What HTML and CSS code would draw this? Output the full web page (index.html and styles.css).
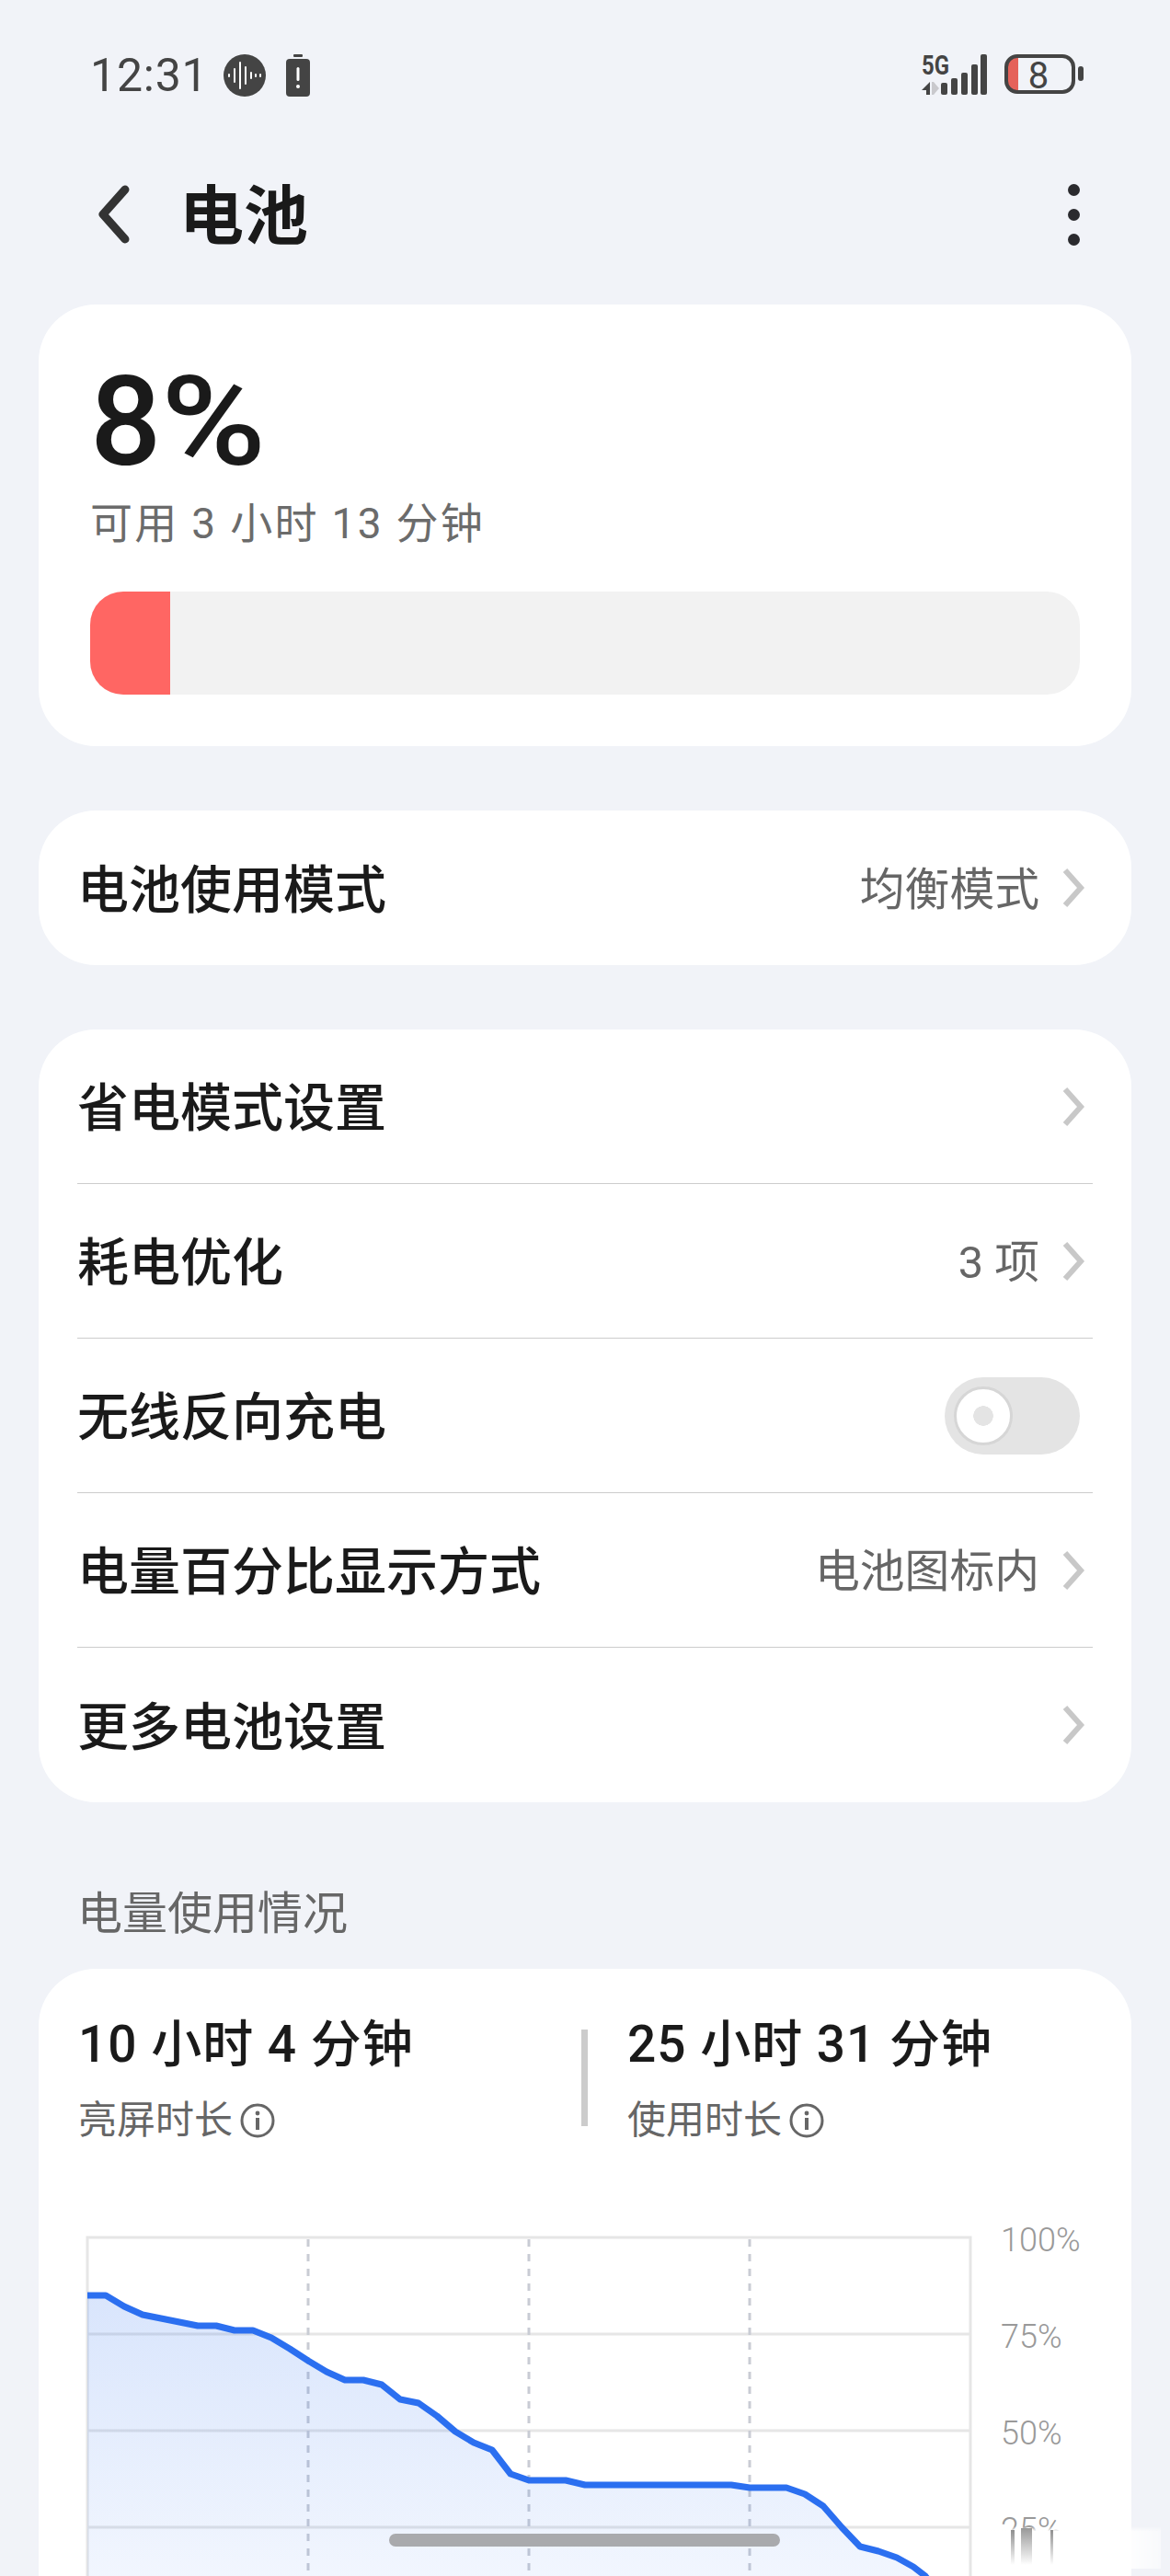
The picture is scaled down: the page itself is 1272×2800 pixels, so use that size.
FILE: index.html
```html
<!DOCTYPE html>
<html lang="zh-CN">
<head>
<meta charset="UTF-8" />
<meta name="viewport" content="width=device-width, initial-scale=1" />
<title>电池</title>
<link rel="stylesheet" href="styles.css">
</head>
<body>
<div class="page">

  <div class="statusbar">
    <div class="status-left">
      <span class="time">12:31</span>
      <svg class="status-mic" width="46" height="46" viewBox="0 0 46 46">
        <circle cx="23" cy="23" r="23" fill="#444"/>
        <g stroke="#fff" stroke-width="2" stroke-linecap="round">
          <path d="M6 22v2M12 16v14M18 9v28M24 14v18M30 20v6M35 22v2M40 22v2"/>
        </g>
      </svg>
      <svg class="status-alert" width="26" height="46" viewBox="0 0 26 46">
        <rect x="8" y="0" width="10" height="3" rx="1" fill="#444"/>
        <rect x="0" y="5" width="26" height="41" rx="4" fill="#444"/>
        <rect x="11.5" y="14" width="3" height="15" rx="1.5" fill="#fff"/>
        <circle cx="13" cy="35" r="2" fill="#fff"/>
      </svg>
    </div>
    <svg class="status-right" width="180" height="64" viewBox="0 -6 180 64">
      <text class="net-label" x="2" y="25" textLength="30" lengthAdjust="spacingAndGlyphs">5G</text>
      <path d="M2 42L11 33V47H7V42Z" fill="#444"/>
      <path d="M13 33H15L21 40L15 47H13Z" fill="#c9c9cd"/>
      <g fill="#444">
        <rect x="23" y="34" width="7" height="13" rx="2"/>
        <rect x="34" y="29" width="7" height="18" rx="2"/>
        <rect x="45" y="23" width="7" height="24" rx="2"/>
        <rect x="56" y="14" width="7" height="33" rx="2"/>
        <rect x="66" y="3" width="7" height="44" rx="2"/>
        <rect x="172" y="16" width="6" height="16" rx="3"/>
      </g>
      <path d="M107 5H105A11 11 0 0 0 94 16V33A11 11 0 0 0 105 44H107Z" fill="#e5625a"/>
      <rect x="94" y="5" width="73" height="39" rx="12" fill="none" stroke="#444" stroke-width="4"/>
      <text class="batt-num" x="129" y="40" text-anchor="middle">8</text>
    </svg>
  </div>

  <div class="nav">
    <svg class="nav-back" width="36" height="66" viewBox="0 0 36 66">
      <path d="M31 6L7 33L31 60" fill="none" stroke="#333" stroke-width="9" stroke-linecap="round" stroke-linejoin="round"/>
    </svg>
    <h1 class="nav-title">电池</h1>
    <div class="nav-more"><i></i><i></i><i></i></div>
  </div>

  <section class="card battery-card">
    <div class="battery-level">8<span class="percent">%</span></div>
    <div class="battery-left">可用 3 小时 13 分钟</div>
    <div class="level-bar"><div class="level-fill"></div></div>
  </section>

  <section class="card mode-card">
    <div class="row row-last">
      <span class="row-name">电池使用模式</span>
      <span class="row-value">均衡模式</span>
      <svg class="chevron" width="26" height="46" viewBox="0 0 26 46"><path d="M4 4L21 23L4 42" fill="none" stroke="#c8c8c8" stroke-width="6"/></svg>
    </div>
  </section>

  <section class="card">
    <div class="row">
      <span class="row-name">省电模式设置</span>
      <svg class="chevron" width="26" height="46" viewBox="0 0 26 46"><path d="M4 4L21 23L4 42" fill="none" stroke="#c8c8c8" stroke-width="6"/></svg>
    </div>
    <div class="row">
      <span class="row-name">耗电优化</span>
      <span class="row-value">3 项</span>
      <svg class="chevron" width="26" height="46" viewBox="0 0 26 46"><path d="M4 4L21 23L4 42" fill="none" stroke="#c8c8c8" stroke-width="6"/></svg>
    </div>
    <div class="row">
      <span class="row-name">无线反向充电</span>
      <span class="toggle"><span class="toggle-knob"></span></span>
    </div>
    <div class="row">
      <span class="row-name">电量百分比显示方式</span>
      <span class="row-value">电池图标内</span>
      <svg class="chevron" width="26" height="46" viewBox="0 0 26 46"><path d="M4 4L21 23L4 42" fill="none" stroke="#c8c8c8" stroke-width="6"/></svg>
    </div>
    <div class="row row-last">
      <span class="row-name">更多电池设置</span>
      <svg class="chevron" width="26" height="46" viewBox="0 0 26 46"><path d="M4 4L21 23L4 42" fill="none" stroke="#c8c8c8" stroke-width="6"/></svg>
    </div>
  </section>

  <h2 class="section-label">电量使用情况</h2>

  <section class="card usage-card">
    <div class="stats">
      <div class="stat stat-first">
        <div class="stat-value">10 小时 4 分钟</div>
        <div class="stat-name">亮屏时长
          <svg width="38" height="38" viewBox="0 0 38 38"><circle cx="19" cy="19" r="17" fill="none" stroke="#666" stroke-width="3"/><circle cx="19" cy="11" r="2.4" fill="#666"/><rect x="17" y="16" width="4" height="13" fill="#666"/></svg>
        </div>
      </div>
      <div class="stat-divider"></div>
      <div class="stat">
        <div class="stat-value">25 小时 31 分钟</div>
        <div class="stat-name">使用时长
          <svg width="38" height="38" viewBox="0 0 38 38"><circle cx="19" cy="19" r="17" fill="none" stroke="#666" stroke-width="3"/><circle cx="19" cy="11" r="2.4" fill="#666"/><rect x="17" y="16" width="4" height="13" fill="#666"/></svg>
        </div>
      </div>
    </div>

    <svg class="chart" width="1110" height="415" viewBox="0 -15 1110 415">
      <defs>
        <linearGradient id="areaFade" gradientUnits="userSpaceOnUse" x1="0" y1="75" x2="0" y2="390">
          <stop offset="0" stop-color="#2b6ff0" stop-opacity="0.18"/>
          <stop offset="1" stop-color="#2b6ff0" stop-opacity="0.06"/>
        </linearGradient>
      </defs>
      <g stroke="#e6e6e6" stroke-width="3" fill="none">
        <path d="M5 400V12H965V400"/>
        <path d="M5 117H965M5 222H965M5 327H965"/>
      </g>
      <g stroke="#c9ccd4" stroke-width="3" stroke-dasharray="8 8">
        <path d="M245 14V400M485 14V400M725 14V400"/>
      </g>
      <path fill="url(#areaFade)" d="M5 75L25 75L45 87L65 96L85 100L105 104L125 108L145 108L165 113L185 113L205 121L225 133L245 146L265 158L285 167L305 167L325 172L345 188L365 192L385 206L405 223L425 235L445 243L465 269L485 276L525 276L546 281L705 281L725 284L765 284L785 291L805 304L825 327L845 348L865 353L885 360L903 370L916 380L925 392V400H5Z"/>
      <path fill="none" stroke="#2b6ff0" stroke-width="7" stroke-linejoin="round" d="M5 75L25 75L45 87L65 96L85 100L105 104L125 108L145 108L165 113L185 113L205 121L225 133L245 146L265 158L285 167L305 167L325 172L345 188L365 192L385 206L405 223L425 235L445 243L465 269L485 276L525 276L546 281L705 281L725 284L765 284L785 291L805 304L825 327L845 348L865 353L885 360L903 370L916 380L925 392"/>
      <g class="axis-label">
        <text x="998" y="27">100%</text>
        <text x="998" y="132">75%</text>
        <text x="998" y="237">50%</text>
        <text x="998" y="342">25%</text>
      </g>
    </svg>
  </section>

</div>

<div class="smudge"></div>
<div class="home-pill"></div>
</body>
</html>
```

FILE: styles.css
```css
html, body {
  margin: 0;
  height: 2800px;
  overflow: hidden;
}

body {
  position: relative;
  background: #f1f3f8;
  color: #1a1a1a;
  font-family: Roboto, "Noto Sans CJK SC", sans-serif;
}

.page {
  padding: 0 42px;
}

/* status bar */
.statusbar {
  height: 164px;
  padding: 0 50px 0 56px;
  display: flex;
  justify-content: space-between;
  align-items: center;
}

.status-left {
  display: flex;
  align-items: center;
}

.time {
  font-size: 50px;
  line-height: 46px;
  letter-spacing: 0.8px;
  color: #444;
  margin-right: 16px;
}

.status-mic {
  margin-right: 22px;
}

.net-label {
  font-size: 29px;
  font-weight: 700;
  fill: #444;
}

.batt-num {
  font-size: 40px;
  fill: #444;
}

/* title */
.nav {
  height: 138px;
  margin-bottom: 29px;
  padding: 0 56px 0 63px;
  display: flex;
  align-items: center;
}

.nav-title {
  margin: 6px 0 0 54px;
  flex: 1;
  font-size: 70px;
  line-height: 80px;
  font-weight: 700;
}

.nav-more {
  display: flex;
  flex-direction: column;
  gap: 14px;
}

.nav-more i {
  display: block;
  width: 13px;
  height: 13px;
  border-radius: 50%;
  background: #2a2a2e;
}

/* cards */
.card {
  background: #fff;
  border-radius: 62px;
  margin-bottom: 69px;
}

.battery-card {
  height: 480px;
  box-sizing: border-box;
  padding: 58px 56px 0;
  margin-bottom: 70px;
}

.mode-card {
  margin-bottom: 70px;
}

.battery-level {
  font-size: 136px;
  line-height: 140px;
  font-weight: 500;
}

/* the percent sign is wider than the font's */
.percent {
  display: inline-block;
  transform: scaleX(1.14);
  transform-origin: left;
}

.battery-left {
  margin-top: 10px;
  font-size: 46px;
  line-height: 60px;
  letter-spacing: 2.3px;
  color: #6b6b6b;
}

.level-bar {
  margin-top: 44px;
  height: 112px;
  border-radius: 36px;
  background: #f2f2f2;
  overflow: hidden;
}

.level-fill {
  width: 87px;
  height: 100%;
  background: #ff6663;
}

/* rows */
.row {
  height: 168px;
  box-sizing: border-box;
  margin: 0 42px;
  border-bottom: 1px solid #ccc;
  display: flex;
  align-items: center;
}

.row-last {
  border-bottom: none;
}

.row-name {
  flex: 1;
  padding-bottom: 6px;
  font-size: 56px;
  font-weight: 500;
}

.row-value {
  padding-bottom: 6px;
  font-size: 48.8px;
  color: #666;
}

.chevron {
  margin: 0 8px 0 24px;
}

.toggle {
  width: 147px;
  height: 84px;
  margin-right: 14px;
  border-radius: 42px;
  background: #e4e4e4;
  display: flex;
  align-items: center;
  padding-left: 10px;
  box-sizing: border-box;
}

.toggle-knob {
  width: 64px;
  height: 64px;
  box-sizing: border-box;
  border-radius: 50%;
  background: radial-gradient(circle, #e4e4e4 10.5px, #fff 11px);
  border: 3px solid #d6d6d6;
}

/* usage */
.section-label {
  margin: 0 0 0 42px;
  padding-top: 23px;
  height: 89px;
  font-size: 49px;
  line-height: 60px;
  font-weight: 400;
  color: #666;
}

.usage-card {
  height: 800px;
  margin-bottom: 0;
  padding-top: 50px;
  box-sizing: border-box;
}

.stats {
  display: flex;
  padding-left: 43px;
  height: 140px;
}

.stat-first {
  width: 547px;
}

.stat-divider {
  width: 7px;
  height: 105px;
  margin: 16px 43px 0 0;
  background: #ccc;
}

.stat-value {
  font-size: 55px;
  line-height: 64px;
  font-weight: 500;
  letter-spacing: 1px;
}

.stat-name {
  margin-top: 26px;
  display: flex;
  align-items: center;
  gap: 8px;
  font-size: 42px;
  line-height: 50px;
  color: #666;
}

.chart {
  display: block;
  margin: 75px 0 0 48px;
}

.axis-label {
  font-size: 36px;
  font-weight: 300;
  fill: #999;
}

/* gesture bar and the blur under it */
.home-pill {
  position: absolute;
  left: 423px;
  top: 2754px;
  width: 425px;
  height: 14px;
  border-radius: 7px;
  background: #a9aaad;
}

.smudge {
  position: absolute;
  left: 1057px;
  top: 2746px;
  width: 205px;
  height: 46px;
  background:
    linear-gradient(#8f8f8f, rgba(255,255,255,0)) 42px 4px / 4px 38px no-repeat,
    linear-gradient(#999, rgba(255,255,255,0)) 53px 2px / 12px 40px no-repeat,
    linear-gradient(#8f8f8f, rgba(255,255,255,0)) 85px 4px / 3px 38px no-repeat,
    linear-gradient(to bottom, rgba(255,255,255,0), #fff 12%, #fff 100%);
  -webkit-mask-image: linear-gradient(to right, transparent, #000 10%, #000 78%, rgba(0,0,0,0.5));
  mask-image: linear-gradient(to right, transparent, #000 10%, #000 78%, rgba(0,0,0,0.5));
}
```
